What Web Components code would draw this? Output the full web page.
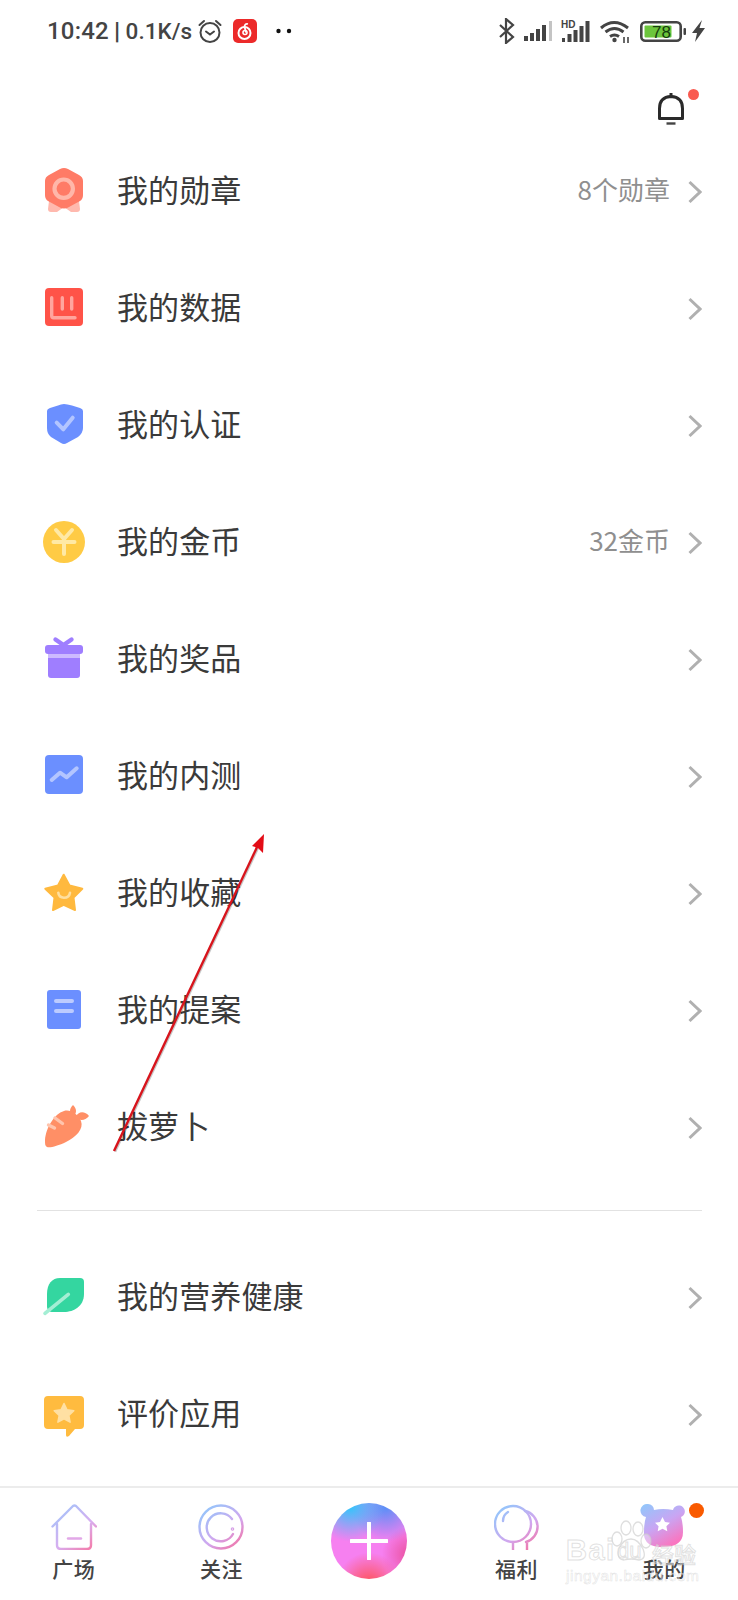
<!DOCTYPE html>
<html lang="zh"><head><meta charset="utf-8"><title>我的</title>
<style>
html,body{margin:0;padding:0;background:#fff}
body{font-family:"Noto Sans CJK SC","Noto Sans",sans-serif}
</style></head><body>
<app-screen>
  <status-bar></status-bar>
  <top-bar></top-bar>
  <menu-list>
    <menu-row label="我的勋章" sub="8个勋章"><svg slot="icon" width="48" height="48" viewBox="0 0 48 48"><path d="M9 33l-1 8q0 3 3 3h6l7-5 7 5h6q3 0 3-3l-1-8z" fill="#ffb9ae"/><path d="M24 0q2 0 4 1l11 6q4 2 4 6v14q0 4-3 6l-11 6q-5 3-10 0L8 33q-3-2-3-6V13q0-4 4-6l11-6q2-1 4-1z" fill="#ff7b66"/><circle cx="23.700" cy="20.700" r="9.200" fill="none" stroke="#ffb7a9" stroke-width="4.200"/></svg></menu-row>
    <menu-row label="我的数据"><svg slot="icon" width="48" height="48" viewBox="0 0 48 48"><rect x="5" y="3" width="38" height="38" rx="4" fill="#ff5348"/><path d="M11.700 12.700v18q0 2 2 2H35M22.300 12.700V24M31.700 12.700V24" fill="none" stroke="#ffa59e" stroke-width="3.400" stroke-linecap="round" stroke-linejoin="round"/></svg></menu-row>
    <menu-row label="我的认证"><svg slot="icon" width="48" height="48" viewBox="0 0 48 48"><path d="M24 2q3 0 8 1.500l8 2.500q3 1 3 3v17q0 5-5 9l-11 6q-3 2-6 0l-10-6q-4-3-4-9V9q0-2 3-3l8-2.500Q21 2 24 2z" fill="#6b8fff"/><path d="M16.700 20.700l6.600 6.600 9.400-11.600" fill="none" stroke="#b3c5ff" stroke-width="4" stroke-linecap="round" stroke-linejoin="round"/></svg></menu-row>
    <menu-row label="我的金币" sub="32金币"><svg slot="icon" width="48" height="48" viewBox="0 0 48 48"><circle cx="24" cy="23" r="21" fill="#ffcb45"/><path d="M16 11l8 9 8-9M13.500 23h21M24 20v15" fill="none" stroke="#ffe9a5" stroke-width="4" stroke-linecap="round"/></svg></menu-row>
    <menu-row label="我的奖品"><svg slot="icon" width="48" height="48" viewBox="0 0 48 48"><path d="M15.500 3.500l8 5.500 8-5.500" fill="none" stroke="#9f7eff" stroke-width="4.400" stroke-linecap="round"/><path d="M8 20h32v19q0 3-3 3H11q-3 0-3-3z" fill="#9f7eff"/><rect x="8" y="18" width="32" height="4" fill="#cdbaff"/><path d="M8 9h32q3 0 3 3v3q0 3-3 3H8q-3 0-3-3v-3q0-3 3-3z" fill="#9f7eff"/></svg></menu-row>
    <menu-row label="我的内测"><svg slot="icon" width="48" height="48" viewBox="0 0 48 48"><rect x="5" y="2" width="38" height="39" rx="4" fill="#6b8fff"/><path d="M11.700 27l8.300-7.300 6.700 4.600 10-9" fill="none" stroke="#b3c5ff" stroke-width="4" stroke-linecap="round" stroke-linejoin="round"/></svg></menu-row>
    <menu-row label="我的收藏"><svg slot="icon" width="48" height="48" viewBox="0 0 48 48"><path d="M23.700 4.700l5.800 10.800 12.800 3.300-8.800 8.700L35 40l-11.300-5.200L13 40l1.500-12.500-9.200-8.700 12.700-3.300z" fill="#ffb93e" stroke="#ffb93e" stroke-width="2" stroke-linejoin="round"/><path d="M18.300 22.700q.5 5 5.700 5t6-5" fill="none" stroke="#ffdf9f" stroke-width="2.600" stroke-linecap="round"/></svg></menu-row>
    <menu-row label="我的提案"><svg slot="icon" width="48" height="48" viewBox="0 0 48 48"><rect x="7" y="3" width="34" height="39" rx="3" fill="#6b8fff"/><path d="M16 14h16M16 24h16" stroke="#bccbff" stroke-width="4" stroke-linecap="round"/></svg></menu-row>
    <menu-row label="拔萝卜"><svg slot="icon" width="48" height="48" viewBox="0 0 48 48" style="overflow:visible"><path d="M33 1C29 5 29 9 33 13C37 9 37 5 33 1zM36 13C38 7 45 7 49 12C45 17 39 17 36 13z" fill="#ff8f66"/><path d="M5 36C6 24 14 10 24 7C30 5 38 10 41 17C44 25 36 33 26 38C18 42 10 44 7 43C5 42 5 40 5 36z" fill="#ff8f66"/><path d="M15 14l7.500 5.500M8.500 21l6 3" stroke="#ffc4ad" stroke-width="3.400" stroke-linecap="round"/></svg></menu-row>
  </menu-list>
  <list-divider></list-divider>
  <menu-list>
    <menu-row label="我的营养健康"><svg slot="icon" width="48" height="48" viewBox="0 0 48 48"><path d="M20 4H40Q44 4 44 8V20C44 32 34 38 24 38H13C9 38 7 36 7 32V20C7 10 12 4 20 4z" fill="#34d6a0"/><path d="M5 39.300L28.300 20.300" stroke="#a4eed4" stroke-width="3.600" stroke-linecap="round"/></svg></menu-row>
    <menu-row label="评价应用"><svg slot="icon" width="48" height="48" viewBox="0 0 48 48"><path d="M8 5h32q4 0 4 4v25q0 4-4 4h-5l-6 7q-3 2-3-1v-6H8q-4 0-4-4V9q0-4 4-4z" fill="#ffbb3f"/><path d="M24 12.500l3 6.300 6.800.9-5 4.700 1.300 6.800-6.100-3.300-6.100 3.300 1.300-6.800-5-4.700 6.800-.9z" fill="#ffe0a3" stroke="#ffe0a3" stroke-width="1.500" stroke-linejoin="round"/></svg></menu-row>
  </menu-list>
  <tab-bar></tab-bar>
  <annotation-arrow></annotation-arrow>
  <baidu-mark></baidu-mark>
</app-screen>
<script>
function make(name, html){
  customElements.define(name, class extends HTMLElement{
    connectedCallback(){
      if(this.shadowRoot) return;
      this.attachShadow({mode:'open'}).innerHTML = typeof html==='function' ? html(this) : html;
    }
  });
}
make('app-screen',`<style>:host{display:flex;flex-direction:column;position:relative;width:738px;height:1600px;overflow:hidden;background:#fff;color:#333}</style><slot></slot>`);

make('status-bar',`<style>
:host{display:flex;align-items:center;height:62px;padding:0 33px 0 47px;box-sizing:border-box;color:#444;font-family:Roboto,"Liberation Sans",sans-serif}
.t{font-size:24px;font-weight:500;letter-spacing:.2px}
.s{font-size:22.500px;font-weight:500;margin-left:5px;white-space:pre}
.s b{font-weight:900;font-size:24px}
.l{display:flex;align-items:center;flex:1}
.r{display:flex;align-items:center}
svg{display:block}
</style>
<div class="l"><span class="t">10:42</span><span class="s"><b>|</b> 0.1K/s</span>
<svg style="margin-left:6px" width="24" height="24" viewBox="0 0 24 24" fill="none" stroke="#444" stroke-width="2"><circle cx="12" cy="13.500" r="9.500"/><path d="M8 12.500l4 3 4-3M1.500 6l4.500-4M22.500 6l-4.500-4" stroke-linecap="round"/></svg>
<svg style="margin-left:11px" width="24" height="24" viewBox="0 0 24 24"><rect width="24" height="24" rx="5" fill="#ec2a2a"/><circle cx="11.500" cy="14" r="6" fill="none" stroke="#fff" stroke-width="2"/><circle cx="12" cy="13.500" r="2" fill="none" stroke="#fff" stroke-width="1.600"/><path d="M15 5q-3-.8-3.500 2.500l1.500 6" fill="none" stroke="#fff" stroke-width="1.800"/></svg>
<svg style="margin-left:18px" width="18" height="6" viewBox="0 0 18 6"><circle cx="3.500" cy="3" r="2.200" fill="#111"/><circle cx="14" cy="3" r="2.200" fill="#111"/></svg></div>
<div class="r">
<svg width="17" height="26" viewBox="0 0 17 26" fill="none" stroke="#444" stroke-width="2.200"><path d="M2 7l13 12-7 6V1l7 6L2 19"/></svg>
<svg style="margin-left:9px" width="28" height="22" viewBox="0 0 28 22"><path d="M0 16h4v5H0zM6 13h4v8H6zM12 9h4v12h-4zM18 5h4v16h-4z" fill="#444"/><path d="M25 1h3v20h-3z" fill="#c4c4c4"/></svg>
<svg style="margin-left:9px" width="29" height="24" viewBox="0 0 29 24"><text x="0" y="9" font-family="Liberation Sans" font-size="10" font-weight="700" fill="#444">HD</text><path d="M1 19h3v4H1zM6.500 15h4v8h-4zM12.500 11h4v12h-4zM18.500 7h4v16h-4zM24.500 2h4v21h-4z" fill="#444"/></svg>
<svg style="margin-left:10px" width="30" height="24" viewBox="0 0 30 24" fill="none" stroke="#444" stroke-width="3"><path d="M1 9q13-11 27 0M5.500 13q9-7 18 0M10 17.500q4.500-3 9 0"/><circle cx="14.500" cy="21" r="2.200" fill="#444" stroke="none"/><path d="M24 18v6M28 18v6" stroke-width="1.600"/></svg>
<svg style="margin-left:10px" width="46" height="21" viewBox="0 0 46 21"><rect x="1.300" y="1.300" width="39.400" height="18.400" rx="4" fill="none" stroke="#444" stroke-width="2.600"/><rect x="4.500" y="4.500" width="27" height="12" rx="1" fill="#6cc53c"/><text x="21.500" y="16.500" text-anchor="middle" font-family="Liberation Sans" font-size="17" fill="#143d0c">78</text><rect x="43.500" y="7" width="2.500" height="7" rx="1" fill="#444"/></svg>
<svg style="margin-left:6px" width="13" height="22" viewBox="0 0 13 22"><path d="M10 0L0 13h5l-2 9L13 8H7.500z" fill="#444"/></svg>
</div>`);

make('top-bar',`<style>
:host{display:flex;justify-content:flex-end;height:71px;padding:30px 53px 0 0;box-sizing:border-box}
.b{position:relative;width:28px;height:34px}
svg{display:block}
i{position:absolute;left:30.500px;top:-3.500px;width:11px;height:11px;border-radius:50%;background:#f95a50}
</style><div class="b"><svg width="28" height="34" viewBox="0 0 28 34" fill="none" stroke="#2a2a2a" stroke-width="3"><path d="M2.500 26.500V16.500Q2.500 5 14 4.500Q25.500 5 25.500 16.500V26.500z" stroke-linejoin="round"/><path d="M14 1v3.500"/><path d="M9.500 31.500h9" stroke-width="2.400" stroke="#444"/></svg><i></i></div>`);

make('menu-list',`<style>:host{display:block}</style><slot></slot>`);

make('menu-row', el=>{
  const sub=el.getAttribute('sub');
  return `<style>
:host{display:flex;align-items:center;height:117.100px;padding:0 36px 0 40px;box-sizing:border-box}
.i{width:48px;height:48px;flex:none;display:block}
::slotted(svg){display:block}
.l{margin-left:29px;flex:1;font-size:31px;line-height:44px;color:#3a3a3a;letter-spacing:.1px;padding-bottom:6px}
.s{font-size:26px;color:#8f8f8f;margin-right:18px;line-height:40px;padding-bottom:5px}
svg.c{display:block;flex:none}
</style><div class="i"><slot name="icon"></slot></div><div class="l">${el.getAttribute('label')}</div>${sub?`<div class="s">${sub}</div>`:''}<svg class="c" width="14" height="24" viewBox="0 0 14 24"><path d="M1.500 2l10.500 10L1.500 22" fill="none" stroke="#b0b0b0" stroke-width="3"/></svg>`;
});

make('list-divider',`<style>:host{display:block;height:1px;margin:23px 36px 29px 37px;background:#e2e2e2}</style>`);

make('tab-bar',`<style>
:host{display:grid;grid-template-columns:repeat(5,1fr);margin-top:auto;height:114px;border-top:2px solid #ececec;box-sizing:border-box;background:#fff}
</style>
<tab-item label="广场"><svg width="46" height="46" viewBox="0 0 46 46" fill="none" stroke="url(#g)" stroke-width="2.400" stroke-linecap="round" stroke-linejoin="round"><defs><linearGradient id="g" gradientUnits="userSpaceOnUse" x1="5" y1="2" x2="40" y2="46"><stop offset="0" stop-color="#9ec6fb"/><stop offset=".6" stop-color="#d8aef0"/><stop offset="1" stop-color="#f57aa8"/></linearGradient></defs><path d="M1.500 22.500L22 2q1.500-1 3 0l20 20.500"/><path d="M6 20v21q0 4 4 4h26q4 0 4-4V20"/><path d="M17 34.500h13" stroke="#e2a8e8"/></svg></tab-item>
<tab-item label="关注"><svg width="46" height="46" viewBox="0 0 46 46" fill="none" stroke="url(#g2)" stroke-width="2.400" stroke-linecap="round"><defs><linearGradient id="g2" gradientUnits="userSpaceOnUse" x1="5" y1="2" x2="40" y2="46"><stop offset="0" stop-color="#8fc8fc"/><stop offset=".6" stop-color="#d2a6ee"/><stop offset="1" stop-color="#f56f9f"/></linearGradient></defs><circle cx="23" cy="23" r="21.500"/><path d="M34 15a14 14 0 1 0 1 15"/><circle cx="34.500" cy="25" r=".6"/></svg></tab-item>
<tab-add></tab-add>
<tab-item label="福利"><svg width="46" height="46" viewBox="0 0 46 46" fill="none" stroke="url(#g3)" stroke-width="2.400" stroke-linecap="round"><defs><linearGradient id="g3" gradientUnits="userSpaceOnUse" x1="5" y1="2" x2="40" y2="46"><stop offset="0" stop-color="#8fc8fc"/><stop offset=".6" stop-color="#d2a6ee"/><stop offset="1" stop-color="#f56f9f"/></linearGradient></defs><circle cx="19" cy="20" r="18"/><path d="M31 7a16 16 0 0 1 1 31M9 17q0-6 5-9M19 38v8M33 38v8"/></svg></tab-item>
<tab-item label="我的" dot="1"><svg width="46" height="46" viewBox="0 0 46 46" style="overflow:visible"><defs><linearGradient id="g4" x1="0" y1="0" x2=".6" y2="1"><stop offset="0" stop-color="#8ec9fb"/><stop offset=".55" stop-color="#c9a5f3"/><stop offset="1" stop-color="#f976c0"/></linearGradient></defs><path d="M7 0a6 6 0 0 1 6 6q9-2 19 0a6 6 0 1 1 8 7q2 6 2 15 0 15-20 15T3 28q0-9 2-15A6 6 0 0 1 7 0z" fill="url(#g4)"/><path d="M21.500 13l2.500 5 5 .7-3.600 3.500.9 5-4.800-2.500-4.800 2.500.9-5L14 18.700l5-.7z" fill="#fff"/></svg></tab-item>`);

make('tab-item', el=>`<style>
:host{display:flex;flex-direction:column;align-items:center;position:relative;padding-top:16px;box-sizing:border-box}
::slotted(svg){display:block}
.ic{height:46px}
.t{font-size:21px;font-weight:500;line-height:30px;margin-top:3px;color:#444;letter-spacing:.5px}
.d{position:absolute;left:${el.hasAttribute('dot')?'99px':'0'};top:15px;width:15px;height:15px;border-radius:50%;background:${el.hasAttribute('dot')?'#f95a00':'transparent'}}
</style><div class="ic"><slot></slot></div><div class="t">${el.getAttribute('label')}</div><div class="d"></div>`);

make('tab-add',`<style>
:host{display:flex;justify-content:center;padding-top:15px;box-sizing:border-box}
.c{width:76px;height:76px;border-radius:50%;background:radial-gradient(circle at 25% 5%,#2fc6fb 0,rgba(47,198,251,0) 38%),radial-gradient(circle at 72% 6%,#5a8ff7 0,rgba(90,143,247,0) 38%),radial-gradient(circle at 50% 108%,#ff4f4f 0,rgba(255,79,79,0) 36%),radial-gradient(circle at 104% 68%,#ea4f9c 0,rgba(234,79,156,0) 30%),#f680f0;display:flex;align-items:center;justify-content:center}
svg{display:block}
</style><div class="c"><svg width="38" height="38" viewBox="0 0 38 38"><path d="M19 1v36M1 19h36" stroke="#fff" stroke-width="4" stroke-linecap="round"/></svg></div>`);

make('annotation-arrow',`<style>:host{position:absolute;left:0;top:0;width:738px;height:1600px;pointer-events:none}svg{display:block}</style>
<svg width="738" height="1600"><path d="M114 1151L258 845" stroke="rgba(0,0,0,.22)" stroke-width="3" transform="translate(.8 .5)"/><path d="M114 1151L258 845" stroke="#d8141c" stroke-width="2.400"/><path d="M264 834l-1 19-5-5-6-2z" fill="#e30c16"/></svg>`);

make('baidu-mark',`<style>
:host{position:absolute;left:564px;top:1518px;width:140px;height:66px;pointer-events:none;font-family:"Liberation Sans",sans-serif}
span{position:absolute;color:rgba(255,255,255,.4);-webkit-text-stroke:1px rgba(205,205,205,.6);white-space:nowrap}
.b{left:2px;top:16px;font-size:29px;font-weight:700;letter-spacing:1.500px}
.d{left:53px;top:20px;font-size:22px}
.z{left:88px;top:22px;font:500 22px/26px "Noto Sans CJK SC",sans-serif}
.j{left:2px;top:49px;font-size:15.500px;letter-spacing:.5px;-webkit-text-stroke:.5px rgba(205,205,205,.6)}
svg{position:absolute;left:46px;top:1px}
</style><svg width="42" height="44" viewBox="0 0 42 44" fill="rgba(255,255,255,.35)" stroke="rgba(205,205,205,.65)" stroke-width="1.300"><ellipse cx="7" cy="20" rx="5" ry="7"/><ellipse cx="16" cy="9" rx="5" ry="7"/><ellipse cx="28" cy="10" rx="5" ry="7"/><ellipse cx="36" cy="22" rx="5" ry="7"/><path d="M21 20q7 0 12 10 4 10-4 11-8-2-15 0-8-1-5-11 4-10 12-10z"/></svg><span class="b">Bai</span><span class="d">du</span><span class="z">经验</span><span class="j">jingyan.baidu.com</span>`);
</script>
</body></html>
